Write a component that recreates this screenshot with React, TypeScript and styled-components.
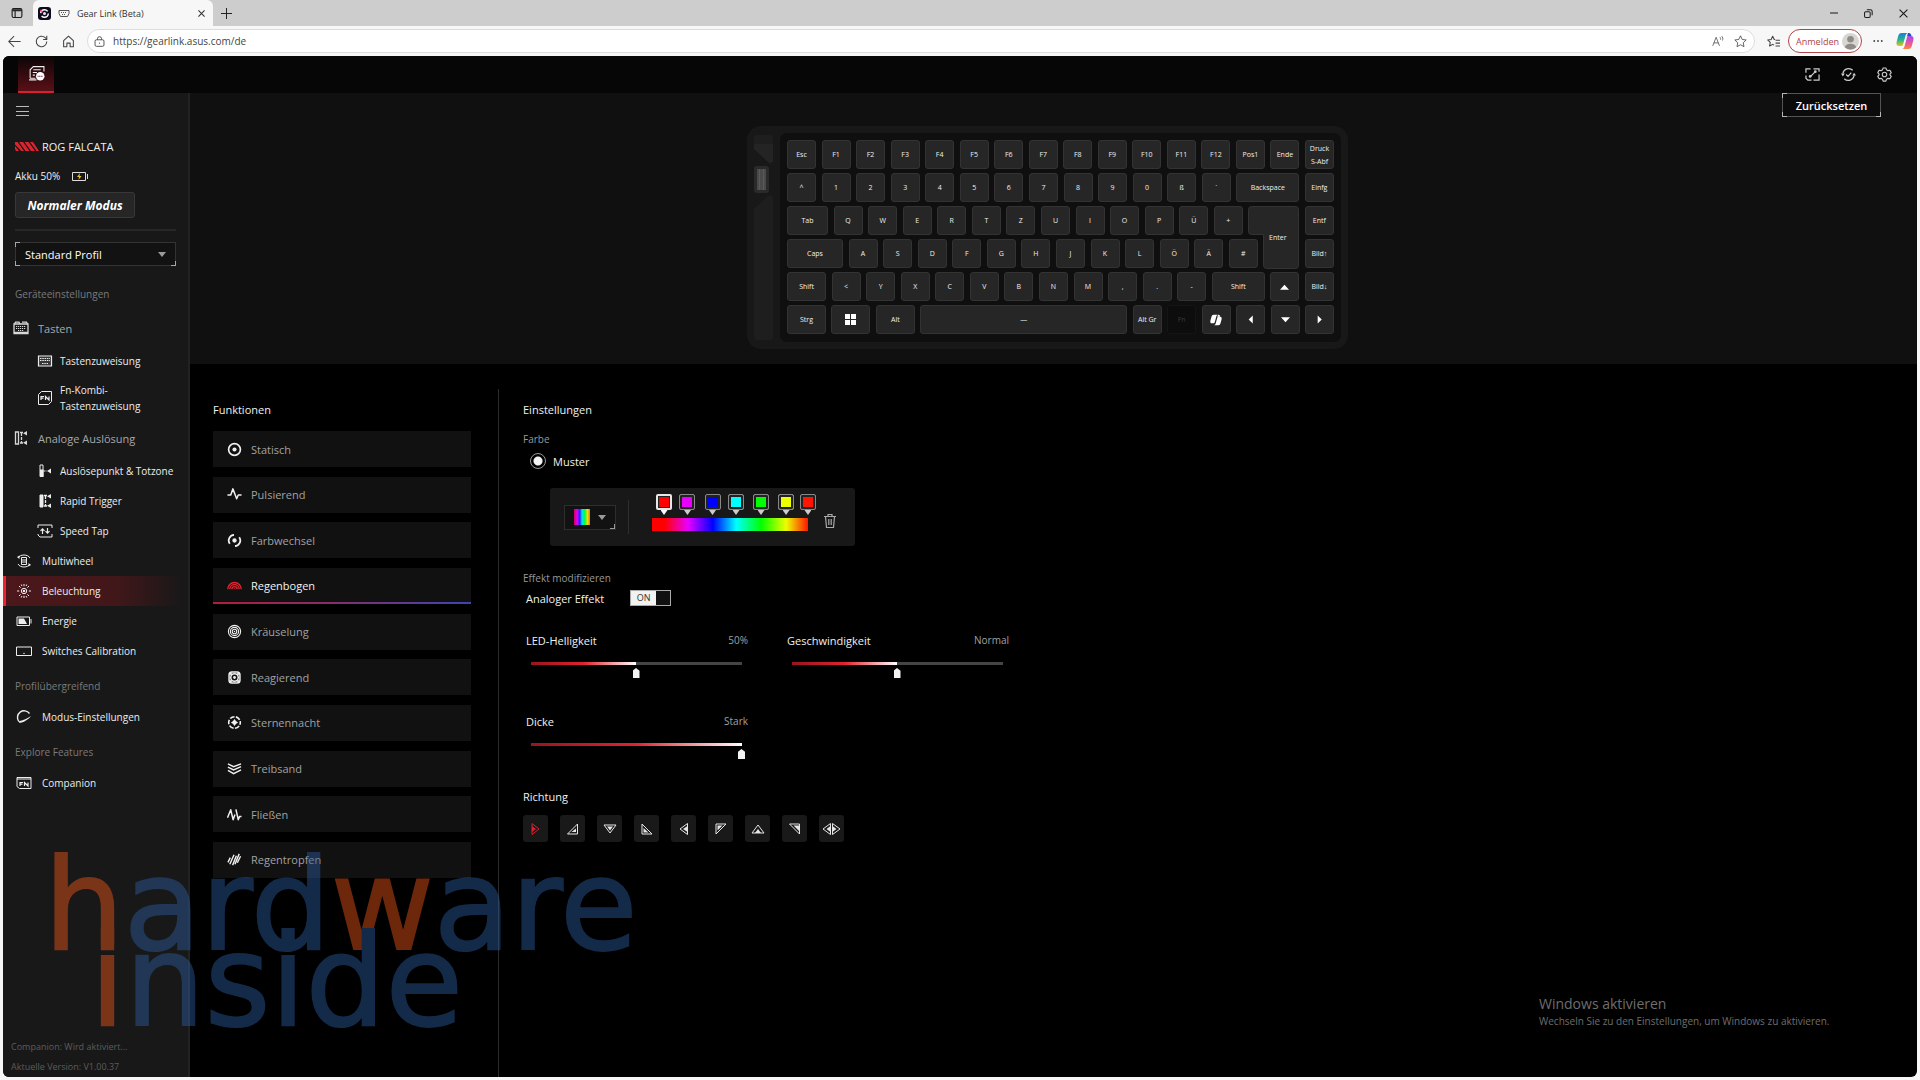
import React, { useState } from "react";
import styled, { createGlobalStyle, css } from "styled-components";

const GlobalStyle = createGlobalStyle`
  *, *::before, *::after { box-sizing: border-box; }
  body {
    margin: 0;
    background: #f7f7f7;
    font-family: "Open Sans", "Noto Sans", sans-serif;
    font-size: 11px;
    color: #f0f0f0;
  }
  button, input, select { font: inherit; color: inherit; }
  button { cursor: pointer; padding: 0; border: 0; background: none; }
  a { color: inherit; text-decoration: none; }
  h2, h3, p, ul { margin: 0; padding: 0; font-weight: 400; }
  ul { list-style: none; }
`;

/* ---------- browser frame ---------- */

const Page = styled.div`
  min-height: 100vh;
  display: flex;
  flex-direction: column;
  position: relative;
  overflow: hidden;
`;

const TabStrip = styled.div`
  height: 26px;
  background: #cdcdcd;
  color: #1b1b1b;
  display: flex;
  align-items: center;
`;

const StripButton = styled.button<{ $w: number }>`
  width: ${(p) => p.$w}px;
  height: 26px;
  display: grid;
  place-items: center;
`;

const BrowserTab = styled.div`
  width: 180px;
  height: 26px;
  padding: 0 8px 0 5px;
  border-radius: 6px 6px 0 0;
  background: #f7f7f7;
  display: flex;
  align-items: center;
  gap: 7px;
  font-size: 9px;
  color: #333;
`;

const TabTitle = styled.span`
  flex: 1;
`;

const WindowButtons = styled.div`
  margin-left: auto;
  display: flex;
`;

const Toolbar = styled.div`
  height: 30px;
  padding: 0 2px 0 1px;
  display: flex;
  align-items: center;
  background: #f7f7f7;
  color: #444;
`;

const ToolButton = styled.button`
  width: 27px;
  height: 26px;
  display: grid;
  place-items: center;
`;

const AddressBar = styled.div`
  flex: 1;
  height: 24px;
  margin: 0 5px;
  padding: 0 0 0 6px;
  border: 1px solid #dcdcdc;
  border-radius: 12px;
  background: #fff;
  display: flex;
  align-items: center;
  gap: 8px;
`;

const AddressInput = styled.input`
  flex: 1;
  border: 0;
  padding: 0;
  outline: 0;
  background: transparent;
  font-size: 10px;
  color: #444;
`;

const AddressActions = styled.div`
  display: flex;
  align-items: center;
  gap: 3px;
`;

const SignIn = styled.button`
  height: 24px;
  margin: 0 2px 0 1px;
  padding: 0 2px 0 7px;
  border: 1px solid #b0444a;
  border-radius: 12px;
  color: #b0444a;
  background: #fff;
  font-size: 9px;
  display: flex;
  align-items: center;
  gap: 3px;
`;

/* ---------- app frame ---------- */

const AppFrame = styled.div`
  flex: 1;
  margin: 0 3px 3px;
  border-radius: 6px;
  overflow: hidden;
  background: #000;
  display: flex;
  flex-direction: column;
`;

const DeviceBar = styled.header`
  height: 37px;
  padding: 0 21px 0 15px;
  background: #060606;
  display: flex;
  align-items: center;
  justify-content: space-between;
`;

const DeviceTab = styled.button`
  width: 36px;
  height: 37px;
  border-bottom: 2px solid #d8202e;
  background: linear-gradient(#0a0606, #5a0f17);
  display: grid;
  place-items: center;
`;

const HeaderTools = styled.div`
  display: flex;
  gap: 12px;
`;

const HeaderButton = styled.button`
  width: 24px;
  height: 24px;
  display: grid;
  place-items: center;
  color: #ccc;
`;

const Body = styled.div`
  flex: 1;
  display: flex;
`;

/* ---------- sidebar ---------- */

const Sidebar = styled.aside`
  width: 187px;
  border-right: 2px solid #222;
  background: #181818;
  display: flex;
  flex-direction: column;
`;

const DeviceInfo = styled.div`
  padding: 8px 12px 0;
  display: flex;
  flex-direction: column;
  align-items: flex-start;
`;

const MenuButton = styled.button`
  height: 20px;
  display: grid;
  place-items: center;
`;

const DeviceName = styled.h2`
  height: 20px;
  margin-top: 15px;
  font-size: 11px;
  display: flex;
  align-items: center;
  gap: 3px;
`;

const Battery = styled.p`
  height: 20px;
  margin-top: 10px;
  font-size: 10px;
  display: flex;
  align-items: center;
  gap: 12px;
`;

const ModeButton = styled.button`
  width: 120px;
  height: 26px;
  margin-top: 6px;
  border: 1px solid #383838;
  border-radius: 3px;
  background: #262626;
  color: #fff;
  font-size: 12px;
  font-weight: 700;
  font-style: italic;
`;

const Rule = styled.hr`
  width: 100%;
  height: 2px;
  margin: 11px 0;
  border: 0;
  background: #272727;
`;

const frame = css`
  border: 1px solid #333;
  background-color: #121212;
  background-image: linear-gradient(#999, #999), linear-gradient(#999, #999), linear-gradient(#999, #999),
    linear-gradient(#999, #999), linear-gradient(#999, #999), linear-gradient(#999, #999);
  background-origin: border-box;
  background-repeat: no-repeat;
  background-size: 5px 1px, 1px 5px, 5px 1px, 1px 5px, 5px 1px, 1px 5px;
  background-position: 0 0, 0 0, 0 100%, 0 100%, 100% 100%, 100% 100%;
  border-color: rgba(255, 255, 255, 0.14);
`;

const SelectBox = styled.div`
  width: 100%;
  height: 24px;
  display: grid;
  align-items: center;
  > * { grid-area: 1 / 1; }
  > svg { justify-self: end; margin-right: 10px; pointer-events: none; }
`;

const ProfileSelect = styled.select`
  ${frame}
  appearance: none;
  width: 100%;
  height: 24px;
  padding: 0 9px;
  border-radius: 0;
  color: #fff;
  outline: 0;
`;

const Nav = styled.nav`
  margin-top: 18px;
  display: flex;
  flex-direction: column;
`;

const GroupLabel = styled.h3`
  height: 20px;
  margin: 10px 0 6px;
  padding-left: 12px;
  font-size: 10px;
  line-height: 20px;
  color: #7a7a7a;
  &:first-child { margin-top: 0; }
`;

const SectionLabel = styled.h3`
  height: 36px;
  padding-left: 10px;
  font-size: 11px;
  color: #a8a8a8;
  display: flex;
  align-items: center;
  gap: 9px;
  > svg { color: #d8d8d8; }
`;

const NavLink = styled.a<{ $sub?: boolean; $active?: boolean; $tall?: boolean }>`
  min-height: ${(p) => (p.$tall ? 44 : 30)}px;
  padding-left: ${(p) => (p.$sub ? 34 : 13)}px;
  font-size: 10px;
  line-height: 16px;
  display: flex;
  align-items: center;
  gap: ${(p) => (p.$sub ? 7 : 10)}px;
  color: #ededed;
  ${(p) =>
    p.$active &&
    css`
      padding-left: 10px;
      border-left: 3px solid #ee2230;
      background: linear-gradient(90deg, #4d171b, #42171a 60%, #181818 97%);
    `}
  > svg { flex: none; }
`;

const SideFooter = styled.footer`
  margin-top: auto;
  padding: 0 8px;
  font-size: 9px;
  line-height: 20px;
  color: #5c5c5c;
`;

/* ---------- preview area ---------- */

const Main = styled.main`
  flex: 1;
  display: flex;
  flex-direction: column;
`;

const Preview = styled.section`
  padding: 0 36px 15px 24px;
  background: #101010;
  display: grid;
  grid-template-columns: 1fr auto 1fr;
`;

const ResetButton = styled.button`
  ${frame}
  grid-column: 3;
  justify-self: end;
  width: 99px;
  height: 24px;
  background-color: #0b0b0b;
  color: #fff;
  font-weight: 600;
  font-size: 11px;
  border-color: rgba(255, 255, 255, 0.3);
`;

const KeyboardCase = styled.div`
  grid-column: 2;
  margin-top: 33px;
  padding: 7px;
  border-radius: 14px;
  background: #181818;
  display: flex;
  gap: 7px;
`;

const KeyPlate = styled.div`
  width: 561px;
  padding: 7px;
  border-radius: 7px;
  background: #0f0f0f;
  display: flex;
  flex-direction: column;
  gap: 4px;
`;

const KeyRow = styled.div`
  display: flex;
  justify-content: space-between;
`;

const Key = styled.button<{ $w: number; $off?: boolean }>`
  width: ${(p) => p.$w}px;
  height: 29px;
  border: 1px solid ${(p) => (p.$off ? "#151515" : "#333")};
  border-radius: 3px;
  background: ${(p) => (p.$off ? "#0d0d0d" : "#262626")};
  color: ${(p) => (p.$off ? "#3a3a3a" : "#f0f0f0")};
  font-size: 7px;
  line-height: 13px;
  white-space: pre-line;
  display: grid;
  place-items: center;
`;

const KeySpace = styled.span<{ $w: number }>`
  width: ${(p) => p.$w}px;
`;

const EnterSlot = styled.span`
  position: relative;
  width: 51px;
`;

const EnterKey = styled.button`
  position: absolute;
  inset: 0 auto auto 0;
  width: 51px;
  height: 63px;
  font-size: 7px;
  color: #f0f0f0;
  display: grid;
  place-items: center;
  > * { grid-area: 1 / 1; }
  > span { padding-left: 8px; }
`;

/* ---------- functions and settings ---------- */

const Workspace = styled.div`
  flex: 1;
  padding: 25px 0 0 23px;
  display: flex;
`;

const FunctionPane = styled.section`
  width: 286px;
  padding-right: 27px;
  border-right: 1px solid #2b2b2b;
`;

const PaneTitle = styled.h2`
  height: 20px;
  margin-top: 11px;
  font-size: 11px;
  line-height: 20px;
`;

const FunctionList = styled.ul`
  min-height: 447px;
  margin-top: 11px;
  display: flex;
  flex-direction: column;
  justify-content: space-between;
`;

const FunctionButton = styled.button<{ $active: boolean }>`
  width: 100%;
  height: 36px;
  padding: 0 14px;
  background: #111;
  color: ${(p) => (p.$active ? "#f2f2f2" : "#a2a2a2")};
  font-size: 11px;
  display: flex;
  align-items: center;
  gap: 9px;
  ${(p) =>
    p.$active &&
    css`
      background: linear-gradient(90deg, #b41c3e, #803070 50%, #3e44b4) 0 100% / 100% 2px no-repeat #111;
    `}
  > svg { color: ${(p) => (p.$active ? "#e02430" : "#f0f0f0")}; }
`;

const SettingsPane = styled.section`
  flex: 1;
  padding-left: 24px;
`;

const MinorLabel = styled.h3<{ $first?: boolean }>`
  height: 20px;
  margin-top: ${(p) => (p.$first ? 9 : 0)}px;
  font-size: 10px;
  line-height: 20px;
  color: #989898;
`;

const PatternOption = styled.label`
  height: 20px;
  margin-top: 2px;
  padding-left: 7px;
  display: flex;
  align-items: center;
  gap: 7px;
  font-size: 11px;
`;

const Radio = styled.input`
  appearance: none;
  width: 16px;
  height: 16px;
  margin: 0;
  border: 1px solid #999;
  border-radius: 50%;
  &:checked { background: radial-gradient(circle, #f4f4f4 4px, transparent 5px); }
`;

const GradientPanel = styled.div`
  width: 305px;
  height: 58px;
  margin: 17px 0 22px 27px;
  padding: 0 18px 0 14px;
  border-radius: 3px;
  background: #181818;
  display: flex;
  align-items: center;
`;

const PresetButton = styled.button`
  width: 52px;
  height: 25px;
  border: 1px solid #2e2e2e;
  background: linear-gradient(#999, #999) 100% 100% / 5px 1px no-repeat,
    linear-gradient(#999, #999) 100% 100% / 1px 5px no-repeat, #121212;
  display: flex;
  align-items: center;
  justify-content: center;
  gap: 8px;
`;

const PresetSwatch = styled.span`
  width: 16px;
  height: 16px;
  background: linear-gradient(90deg, #d00060, #e000ff 20%, #2020ff 36%, #00e0ff 50%, #00ff40 68%, #f0e000 84%, #ff7000);
`;

const PanelRule = styled.span`
  width: 1px;
  height: 34px;
  margin: 0 23px 0 12px;
  background: #2e2e2e;
`;

const GradientTrack = styled.div`
  position: relative;
  align-self: flex-start;
  width: 158px;
  margin-top: 6px;
  padding-top: 24px;
`;

const GradientBar = styled.div`
  height: 13px;
`;

const Stop = styled.button<{ $color: string; $active: boolean }>`
  position: absolute;
  top: 0;
  width: 16px;
  height: 21px;
  margin-left: -8px;
  display: grid;
  justify-items: center;
  grid-template-rows: 16px 5px;
  &::before {
    content: "";
    width: 16px;
    height: 16px;
    border: ${(p) => (p.$active ? "2px solid #e8e8e8" : "1px solid #888")};
    border-radius: 2px;
    background: ${(p) => p.$color};
    box-shadow: inset 0 0 0 ${(p) => (p.$active ? 1 : 2)}px #222;
  }
  &::after {
    content: "";
    width: 7px;
    height: 5px;
    background: ${(p) => (p.$active ? "#fff" : "#ccc")};
    clip-path: polygon(0 0, 100% 0, 50% 100%);
  }
`;

const TrashButton = styled.button`
  width: 14px;
  height: 16px;
  margin: 8px 0 0 15px;
`;

const EffectRow = styled.div`
  height: 20px;
  padding-left: 3px;
  display: flex;
  align-items: center;
  gap: 26px;
`;

const Toggle = styled.button`
  width: 41px;
  height: 16px;
  border: 1px solid #aaa;
  background: #111;
  display: flex;
  > span {
    width: 25px;
    background: #f2f2f2;
    color: #333;
    font-size: 9px;
    line-height: 14px;
  }
`;

const Sliders = styled.div`
  margin: 22px 0 0 3px;
  display: grid;
  grid-template-columns: 222px 222px;
  gap: 32px 39px;
`;

const SliderField = styled.div`
  height: 49px;
`;

const SliderHead = styled.div`
  height: 20px;
  display: flex;
  align-items: center;
  justify-content: space-between;
  > output { font-size: 10px; color: #a0a0a0; }
`;

const Range = styled.input`
  --fill: 50%;
  appearance: none;
  display: block;
  width: 218px;
  height: 17px;
  margin: 12px 0 0 1px;
  background: linear-gradient(90deg, #98141f, #e22230 calc(var(--fill) / 2), #fff var(--fill), #454545 var(--fill))
    center top / calc(100% - 7px) 3px no-repeat;
  outline: 0;
  &::-webkit-slider-runnable-track { height: 17px; }
  &::-webkit-slider-thumb {
    appearance: none;
    width: 7px;
    height: 10px;
    margin-top: 6px;
    background: #f2f2f2;
    clip-path: polygon(50% 0, 100% 28%, 100% 100%, 0 100%, 0 28%);
  }
`;

const DirectionTitle = styled.h3`
  height: 20px;
  margin-top: 27px;
  font-size: 11px;
  line-height: 20px;
`;

const Directions = styled.div`
  margin-top: 8px;
  display: flex;
  gap: 12px;
`;

const DirectionButton = styled.button<{ $active: boolean }>`
  width: 25px;
  height: 27px;
  border-radius: 3px;
  background: #191919;
  color: ${(p) => (p.$active ? "#d8202e" : "#e6e6e6")};
  display: grid;
  place-items: center;
`;

/* ---------- overlays ---------- */

const Watermark = styled.div`
  position: absolute;
  left: 44px;
  bottom: 60px;
  font-family: "DejaVu Sans", sans-serif;
  font-size: 126px;
  line-height: 76px;
  color: #2c5da0;
  opacity: 0.45;
  pointer-events: none;
  -webkit-text-stroke: 2px currentColor;
  > div + div { padding-left: 46px; }
  em { font-style: normal; color: #f25718; }
`;

const Activation = styled.div`
  position: absolute;
  right: 80px;
  bottom: 51px;
  min-width: 301px;
  color: #6e6e6e;
  font-size: 10px;
  line-height: 16px;
  pointer-events: none;
  > strong { display: block; font-weight: 400; font-size: 14px; line-height: 18px; }
`;

/* ---------- icons ---------- */

type IconProps = { w?: number; h?: number; box?: string; sw?: number; children: React.ReactNode };
const Icon = ({ w = 16, h = w, box = "0 0 16 16", sw = 1, children }: IconProps) => (
  <svg width={w} height={h} viewBox={box} fill="none" stroke="currentColor" strokeWidth={sw} aria-hidden="true">
    {children}
  </svg>
);
const F = { fill: "currentColor", stroke: "none" };

const Caret = () => (
  <svg width="8" height="5" viewBox="0 0 8 5" aria-hidden="true">
    <path d="M0 0h8L4 5z" fill="#9a9a9a" />
  </svg>
);

const icons: Record<string, React.ReactNode> = {
  keys: <Icon><path d="M1 4h14v9.500H1zM1.500 4l1-1.800h3.500l1 1.800M9 2.200h4.500l1 1.800M1 12.500h14" strokeWidth="1.300" /><path d="M3 6.500h10M3 8.500h10M5 10.500h6" strokeDasharray="1.200 .8" /></Icon>,
  keyboard: <Icon><path d="M1.500 3h13v10h-13z" fill="currentColor" fillOpacity=".15" strokeWidth="1.200" /><path d="M3 5.500h10M3 7.500h10M5 10.500h6" strokeDasharray="1.500 .8" /></Icon>,
  fn: <Icon><path d="M4.500 1.500h10v10l-3 3h-10v-10z" /><path d="M4 10V6.500h3M4 8.200h2.500M8.500 10V6.500L12 10V6.500" strokeWidth="1.200" /></Icon>,
  analog: <Icon><path d="M2.500 2h3v12h-3z" strokeWidth="1.300" /><path d="M7 2.500h4M7 13h4M8.500 3v10" strokeDasharray="3 1" strokeWidth="1.300" /><path d="M14 1v4.500L10 3.200zM14 10.500V15l-4-2.200z" {...F} /></Icon>,
  point: <Icon><path d="M3 2h3v11.500H3z" /><path d="M3 6.500h3.500V14H3zM14 5.500v5L10 8z" {...F} /><path d="M6.500 8H10" strokeDasharray="2 1" /></Icon>,
  rapid: <Icon><path d="M3 2h3v12H3z" fill="currentColor" /><path d="M7 2.500h4M7 13h4M8.500 3v10" strokeDasharray="3 1" strokeWidth="1.300" /><path d="M14 1v4.500L10 3.200zM14 10.500V15l-4-2.200z" {...F} /></Icon>,
  tap: <Icon><path d="M1 5V2h14v3M1 11v1l2 2h12v-3" /><path d="M5.500 11V6M3.500 7.800l2-2 2 2M10.500 5v5M8.500 8.200l2 2 2-2" strokeWidth="1.200" /></Icon>,
  wheel: <Icon><path d="M5.500 4.500h5v7h-5zM7 6v4M9 6v4M2 5c1-2 3.500-3 6-3s5 1 6 3M2 11c1 2 3.500 3 6 3s5-1 6-3" /><path d="M1 4l2.500-1.500V6zM15 12l-2.500 1.500V10z" {...F} /></Icon>,
  light: <Icon><circle cx="8" cy="8" r="2.700" /><circle cx="8" cy="8" r="1.300" {...F} /><path d="M8 1v2.200M8 12.800V15M1 8h2.200M12.800 8H15M3 3l1.600 1.600M11.400 11.400L13 13M3 13l1.600-1.600M11.400 4.600L13 3M5.300 1.500l.6 1.500M10.700 1.500l-.6 1.500M5.300 14.500l.6-1.500M10.700 14.500l-.6-1.500" /></Icon>,
  energy: <Icon><path d="M1 4h12.500v8.500H1zM15 6v4.500" /><path d="M2.500 5.500H8l3 5.500H2.500z" {...F} /></Icon>,
  calib: <Icon><path d="M.5 4h15v8.500H.5z" /><path d="M7 11l1-1.500L9 11z" {...F} /></Icon>,
  gauge: <Icon><path d="M2.800 12.500A6.300 6.300 0 1113.500 4.500" strokeWidth="1.400" /><path d="M3 13.800C7 14 12 11 15 7 12 9 8 11.500 3 12.200z" {...F} /></Icon>,
  companion: <Icon><path d="M1 2.500h14v11H3.500L1 11.500zM1 4h14" /><path d="M4 11V7.500h3M4 9.200h2.500M8.500 11V7.500L12 11V7.500" strokeWidth="1.200" /></Icon>,
};

const fnIcons: Record<string, React.ReactNode> = {
  Statisch: <Icon w={15} sw={1.8}><circle cx="8" cy="8" r="6.300" /><circle cx="8" cy="8" r="2.200" {...F} /></Icon>,
  Pulsierend: <Icon w={15} sw={1.6}><path d="M.5 8.500H4L6.300 2l4 10.500 1.700-4h3.500" strokeLinejoin="round" /></Icon>,
  Farbwechsel: <Icon w={15} sw={1.9}><path d="M3 11.500A6 6 0 017.500 2M13 4.500A6 6 0 018.500 14" /><circle cx="8" cy="8" r="2.300" {...F} /></Icon>,
  Regenbogen: <Icon w={15} sw={1.5}><path d="M.8 12a7.200 7.200 0 0114.400 0M3 12a5 5 0 0110 0M5.200 12a2.800 2.800 0 015.600 0" /><path d="M7 12a1 1 0 012 0z" {...F} /></Icon>,
  Kräuselung: <Icon w={15} sw={1.2}><circle cx="8" cy="8" r="6.500" /><circle cx="8" cy="8" r="4.400" /><circle cx="8" cy="8" r="2.400" /><circle cx="8" cy="8" r=".8" {...F} /></Icon>,
  Reagierend: <Icon w={15} sw={1.6}><rect x="2.200" y="2.200" width="11.600" height="11.600" rx="3" /><circle cx="8" cy="8" r="4" /><circle cx="8" cy="8" r="1.500" {...F} /><path d="M3 3l2 2M13 3l-2 2M3 13l2-2M13 13l-2-2" strokeWidth="2.200" /></Icon>,
  Sternennacht: <Icon w={15} sw={1.7}><circle cx="8" cy="8" r="6.200" strokeDasharray="5 1.500" strokeDashoffset="2.500" /><path d="M8 4.200l1.500 2.300L11.800 8 9.500 9.500 8 11.800 6.500 9.500 4.200 8l2.300-1.500z" {...F} /></Icon>,
  Treibsand: <Icon w={15} sw={1.5}><path d="M1 3l6 3 8-3M1 6.500l6 3 8-3.500M1 10l6 3.500L15 9.500" /></Icon>,
  Fließen: <Icon w={15} sw={1.6}><path d="M.5 11.500L4 3l2.500 10.500 2-5.500M9.500 2.500L12 13.500l1.500-3.500h2" strokeLinejoin="round" /></Icon>,
  Regentropfen: <Icon w={15} sw={1.5}><path d="M1 11l2.500-5M3 13L7.500 3M6 14L10 4M8.500 13L13 2M11 11.500l3.500-7" /></Icon>,
};

const CopilotGlyph = ({ color }: { color?: boolean }) => (
  <svg width={color ? 18 : 12} height={color ? 18 : 12} viewBox="0 0 18 18" aria-hidden="true">
    <defs>
      <linearGradient id="cpA" x1="0" y1="0" x2="0" y2="1">
        <stop offset="0" stopColor="#1b7fe0" /><stop offset=".5" stopColor="#22b38c" /><stop offset="1" stopColor="#e5c51a" />
      </linearGradient>
      <linearGradient id="cpB" x1="0" y1="0" x2="0" y2="1">
        <stop offset="0" stopColor="#a24be8" /><stop offset=".6" stopColor="#f0569a" /><stop offset="1" stopColor="#f98a3c" />
      </linearGradient>
    </defs>
    <path d="M5.500 1h6.500c-1.500.3-2.200 1.400-2.600 3L7.200 12c-.5 1.500-1 2-2.500 2H3C.8 14 0 12.300.6 10L2.200 4C2.800 2 3.700 1 5.500 1z" fill={color ? "url(#cpA)" : "#fff"} />
    <path d="M12.500 17H6c1.500-.3 2.200-1.400 2.600-3l2.200-8c.5-1.500 1-2 2.500-2H15c2.200 0 3 1.700 2.400 4l-1.600 6c-.6 2-1.500 3-3.300 3z" fill={color ? "url(#cpB)" : "#fff"} />
    <path d="M12 1h.8c1.600 0 2.200 1 2.700 3h-2.700c-1.300 0-1.900.6-2.400 2z" fill={color ? "#1f4fc8" : "#fff"} />
  </svg>
);

const arrowPaths: Record<string, string> = {
  up: "M0 8.500h10L5 3z",
  down: "M0 2.500h10L5 8z",
  left: "M7.500 .5v9L3 5z",
  right: "M3 .5v9L7.500 5z",
};
const Arrow = ({ dir }: { dir: string }) => (
  <svg width="9" height="9" viewBox="0 0 10 10" aria-hidden="true">
    <path d={arrowPaths[dir]} fill="#fff" />
  </svg>
);

/* ---------- keyboard data ---------- */

type KeyDef = { t: string; w?: number; glyph?: React.ReactNode; off?: boolean; kind?: "enter" | "space" };
const k = (s: string): KeyDef[] => s.split(" ").map((t) => ({ t }));
const rows: KeyDef[][] = [
  [...k("Esc F1 F2 F3 F4 F5 F6 F7 F8 F9 F10 F11 F12 Pos1 Ende"), { t: "Druck\nS-Abf" }],
  [...k("^ 1 2 3 4 5 6 7 8 9 0 ß ´"), { t: "Backspace", w: 63 }, { t: "Einfg" }],
  [{ t: "Tab", w: 41 }, ...k("Q W E R T Z U I O P Ü +"), { t: "Enter", kind: "enter" }, { t: "Entf" }],
  [{ t: "Caps", w: 56 }, ...k("A S D F G H J K L Ö Ä #"), { t: "", w: 36, kind: "space" }, { t: "Bild↑" }],
  [{ t: "Shift", w: 39 }, ...k("< Y X C V B N M , . -"), { t: "Shift", w: 53 }, { t: "Hoch", glyph: <Arrow dir="up" /> }, { t: "Bild↓" }],
  [
    { t: "Strg", w: 39 },
    { t: "Windows", w: 39, glyph: <svg width="11" height="11" viewBox="0 0 11 11" aria-hidden="true"><path d="M0 0h5v5H0zM6 0h5v5H6zM0 6h5v5H0zM6 6h5v5H6z" fill="#fff" /></svg> },
    { t: "Alt", w: 39 },
    { t: "—", w: 207 },
    { t: "Alt Gr" },
    { t: "Fn", off: true },
    { t: "Copilot", glyph: <CopilotGlyph /> },
    { t: "Links", glyph: <Arrow dir="left" /> },
    { t: "Runter", glyph: <Arrow dir="down" /> },
    { t: "Rechts", glyph: <Arrow dir="right" /> },
  ],
];

const Keyboard = () => (
  <KeyboardCase>
    <svg width="19" height="209" viewBox="0 0 19 209" aria-hidden="true">
      <path d="M0 11V5a3 3 0 013-3h13a3 3 0 013 3v6z" fill="#1e1e1e" />
      <path d="M0 11h19v15a3 3 0 01-5 3L0 16z" fill="#242424" />
      <rect x="0" y="33" width="15" height="27" rx="3" fill="#2a2a2a" />
      <rect x="3" y="36" width="9" height="21" fill="#4a4a4a" />
      <path d="M5.500 36v21M9.500 36v21" stroke="#5a5a5a" />
      <path d="M0 76L14 63a3 3 0 015 2v139a3 3 0 01-3 3H3a3 3 0 01-3-3z" fill="#1e1e1e" />
    </svg>
    <KeyPlate>
      {rows.map((row, r) => (
        <KeyRow key={r}>
          {row.map((d, i) => {
            if (d.kind === "space") return <KeySpace key={i} $w={d.w ?? 29} />;
            if (d.kind === "enter")
              return (
                <EnterSlot key={i}>
                  <EnterKey>
                    <svg width="51" height="63" viewBox="0 0 51 63" aria-hidden="true">
                      <path d="M3.500.5h44a3 3 0 013 3v56a3 3 0 01-3 3h-29a3 3 0 01-3-3V28.500h-12a3 3 0 01-3-3v-22a3 3 0 013-3z" fill="#262626" stroke="#333" />
                    </svg>
                    <span>{d.t}</span>
                  </EnterKey>
                </EnterSlot>
              );
            return (
              <Key key={i} $w={d.w ?? 29} $off={d.off} aria-label={d.glyph ? d.t : undefined}>
                {d.glyph ?? d.t}
              </Key>
            );
          })}
        </KeyRow>
      ))}
    </KeyPlate>
  </KeyboardCase>
);

/* ---------- settings data ---------- */

const stops = [
  { c: "#ff0000", p: 8 },
  { c: "#e800ff", p: 23 },
  { c: "#0000ff", p: 39 },
  { c: "#00ffff", p: 54 },
  { c: "#00ff00", p: 70 },
  { c: "#eeff00", p: 86 },
  { c: "#ff1500", p: 100 },
];

const directionShapes: [string, string, string][] = [
  ["Rechts", "M4 2.500v11L11 8z", "M4 5v6L8 8z"],
  ["Oben rechts", "M12.500 3v10h-10z", "M11 7.500V11H6.500z"],
  ["Unten", "M2 4h12L8 12z", "M5 5.500h6L8 9.500z"],
  ["Oben links", "M3 3v10h10z", "M4.500 7v4.500h5z"],
  ["Links", "M11.500 2.500v11L4 8z", "M11.500 5v6L7 8z"],
  ["Unten links", "M3 13V3h10z", "M4.500 9.500V4.500h5z"],
  ["Oben", "M2 12h12L8 4z", "M5 12h6L8 8z"],
  ["Unten rechts", "M12.500 13V3h-10z", "M12 10V4.500H6.500z"],
];

type SliderProps = { id: string; label: string; text: (v: number) => string; initial: number };
const Slider = ({ id, label, text, initial }: SliderProps) => {
  const [value, setValue] = useState(initial);
  return (
    <SliderField>
      <SliderHead>
        <label htmlFor={id}>{label}</label>
        <output htmlFor={id}>{text(value)}</output>
      </SliderHead>
      <Range
        id={id}
        type="range"
        min={0}
        max={100}
        value={value}
        onChange={(e) => setValue(Number(e.target.value))}
        style={{ "--fill": `${value}%` } as React.CSSProperties}
      />
    </SliderField>
  );
};

const BrowserChrome = () => (
  <>
    <TabStrip>
      <StripButton $w={33} aria-label="Tab-Aktionen">
        <Icon w={12}><rect x="1.500" y="2" width="13" height="12" rx="2" strokeWidth="1.500" /><path d="M2 5h12M5.500 5v9" strokeWidth="1.500" /><path d="M2 3h12v2H2z" {...F} /></Icon>
      </StripButton>
      <BrowserTab>
        <svg width="13" height="13" viewBox="0 0 13 13" aria-hidden="true">
          <rect width="13" height="13" rx="3" fill="#0c0c1c" />
          <circle cx="6.500" cy="6.500" r="3.800" fill="none" stroke="#fff" strokeWidth="1.500" strokeDasharray="9 3" />
          <circle cx="6.500" cy="6.500" r="1.500" fill="#dfe4ff" /><path d="M2 3l3 2" stroke="#e93a7a" strokeWidth="1.200" />
        </svg>
        <svg width="12" height="7" viewBox="0 0 12 7" fill="none" stroke="#555" aria-hidden="true">
          <path d="M1 .5h10v3L9.500 6.500h-7L1 3.500z" /><path d="M3 2.500h6M4 4.500h4" strokeDasharray="1 1" />
        </svg>
        <TabTitle>Gear Link (Beta)</TabTitle>
        <StripButton $w={8} aria-label="Tab schließen"><Icon w={7} sw={2.4}><path d="M1 1l14 14M15 1L1 15" /></Icon></StripButton>
      </BrowserTab>
      <StripButton $w={26} aria-label="Neuer Tab"><Icon w={11} sw={1.4}><path d="M8 0v16M0 8h16" /></Icon></StripButton>
      <WindowButtons>
        <StripButton $w={35} aria-label="Minimieren"><Icon w={8} sw={2}><path d="M0 8h16" /></Icon></StripButton>
        <StripButton $w={35} aria-label="Verkleinern"><Icon w={9} sw={1.8}><rect x="1" y="5" width="10" height="10" rx="2" /><path d="M5 1.500h6.500a3 3 0 013 3V11" /></Icon></StripButton>
        <StripButton $w={34} aria-label="Schließen"><Icon w={9} sw={2}><path d="M1 1l14 14M15 1L1 15" /></Icon></StripButton>
      </WindowButtons>
    </TabStrip>
    <Toolbar>
      <ToolButton aria-label="Zurück"><Icon w={13}><path d="M15.500 8H1M7.500 1.500L1 8l6.500 6.500" strokeWidth="1.300" /></Icon></ToolButton>
      <ToolButton aria-label="Neu laden"><Icon w={13}><path d="M14.500 8a6.500 6.500 0 11-2-4.700L14.500 5M14.500 1v4.500H10" strokeWidth="1.300" /></Icon></ToolButton>
      <ToolButton aria-label="Startseite"><Icon w={13}><path d="M2 7l6-5.500L14 7v7.500h-4V10H6v4.500H2z" strokeLinejoin="round" strokeWidth="1.300" /></Icon></ToolButton>
      <AddressBar>
        <Icon w={11} sw={1.3}><rect x="1.500" y="5.500" width="13" height="9.500" rx="2" /><path d="M5 5.500V4a3 3 0 016 0v1.500" /><circle cx="8" cy="10.300" r="1" {...F} /></Icon>
        <AddressInput aria-label="Adresse" readOnly value="https://gearlink.asus.com/de" />
        <AddressActions>
          <Icon w={12}><path d="M1 14.500L5.500 3 10 14.500M2.500 10.500h6M10.500 3c1 .8 1.200 2 .8 3.200M13 1.500c1.500 1.500 1.800 3.800 1 5.800" /></Icon>
          <ToolButton aria-label="Favorit hinzufügen"><Icon w={13}><path d="M8 1l2.100 4.500 4.900.6-3.600 3.400.9 4.900L8 12l-4.300 2.400.9-4.900L1 6.100l4.900-.6z" strokeLinejoin="round" /></Icon></ToolButton>
        </AddressActions>
      </AddressBar>
      <ToolButton aria-label="Favoriten"><Icon w={13}><path d="M10 5.600L8.900 5.500 7 1.500 5.100 5.500.8 6.100l3.200 3.100-.8 4.400L7 11.500l1.800 1M10.500 6.500H16M10.500 10H16M10.500 13.500H16" strokeWidth="1.300" strokeLinejoin="round" /></Icon></ToolButton>
      <SignIn>
        Anmelden
        <svg width="17" height="17" viewBox="0 0 17 17" aria-hidden="true"><circle cx="8.500" cy="8.500" r="8.500" fill="#d8d6d3" /><circle cx="8.500" cy="6.300" r="3.300" fill="#8f8b87" /><path d="M3 14.500c0-5 11-5 11 0a8.500 8.500 0 01-11 0z" fill="#8f8b87" /></svg>
      </SignIn>
      <ToolButton aria-label="Mehr"><Icon w={10}><circle cx="2" cy="8" r="1.500" {...F} /><circle cx="8" cy="8" r="1.500" {...F} /><circle cx="14" cy="8" r="1.500" {...F} /></Icon></ToolButton>
      <ToolButton aria-label="Copilot"><CopilotGlyph color /></ToolButton>
    </Toolbar>
  </>
);

const SideNav = () => (
  <Sidebar>
    <DeviceInfo>
      <MenuButton aria-label="Menü">
        <svg width="14" height="12" viewBox="0 0 14 12" stroke="#bbb" aria-hidden="true"><path d="M1 1.500h13M1 6.500h13M1 10.500h13" /></svg>
      </MenuButton>
      <DeviceName>
        <svg width="24" height="9" viewBox="0 0 24 9" fill="#dc2430" aria-hidden="true">
          <path d="M0 0h2.500l6.500 9H6.300L0 2.500zM4 0h4l6.500 9h-4zM9.500 0h4l6.500 9h-4zM15 0h3l6 9h-2.500zM0 4l4 5H1L0 7z" />
        </svg>
        ROG FALCATA
      </DeviceName>
      <Battery>
        Akku 50%
        <svg width="16" height="9" viewBox="0 0 16 9" fill="none" aria-hidden="true">
          <path d="M.5.500h13v8H.5zM15.500 2v5" stroke="#ddd" /><path d="M8 1L5 5h2L6.500 8l3-4h-2z" fill="#f2c21b" />
        </svg>
      </Battery>
      <ModeButton>Normaler Modus</ModeButton>
      <Rule />
      <SelectBox>
        <ProfileSelect aria-label="Profil" defaultValue="Standard Profil">
          <option>Standard Profil</option>
        </ProfileSelect>
        <Caret />
      </SelectBox>
    </DeviceInfo>
    <Nav>
      <GroupLabel>Geräteeinstellungen</GroupLabel>
      <SectionLabel>{icons.keys}Tasten</SectionLabel>
      <NavLink href="#tasten" $sub>{icons.keyboard}Tastenzuweisung</NavLink>
      <NavLink href="#fn" $sub $tall>{icons.fn}<span>Fn-Kombi-<br />Tastenzuweisung</span></NavLink>
      <SectionLabel>{icons.analog}Analoge Auslösung</SectionLabel>
      <NavLink href="#punkt" $sub>{icons.point}Auslösepunkt &amp; Totzone</NavLink>
      <NavLink href="#rapid" $sub>{icons.rapid}Rapid Trigger</NavLink>
      <NavLink href="#speed" $sub>{icons.tap}Speed Tap</NavLink>
      <NavLink href="#wheel">{icons.wheel}Multiwheel</NavLink>
      <NavLink href="#licht" $active aria-current="page">{icons.light}Beleuchtung</NavLink>
      <NavLink href="#energie">{icons.energy}Energie</NavLink>
      <NavLink href="#switches">{icons.calib}Switches Calibration</NavLink>
      <GroupLabel>Profilübergreifend</GroupLabel>
      <NavLink href="#modus">{icons.gauge}Modus-Einstellungen</NavLink>
      <GroupLabel>Explore Features</GroupLabel>
      <NavLink href="#companion">{icons.companion}Companion</NavLink>
    </Nav>
    <SideFooter>
      <p>Companion: Wird aktiviert...</p>
      <p>Aktuelle Version: V1.00.37</p>
    </SideFooter>
  </Sidebar>
);

export default function App() {
  const [effect, setEffect] = useState("Regenbogen");
  const [direction, setDirection] = useState("Rechts");
  const [analog, setAnalog] = useState(true);
  return (
    <Page>
      <GlobalStyle />
      <BrowserChrome />
      <AppFrame>
        <DeviceBar>
          <DeviceTab aria-label="Tastatur">
            <Icon w={17}><path d="M2 12.500V4.500L5 1.500h10V6M1 14h7M2 12.500h5M5 4.500h7M4.500 7h4M4.500 9.500h2" stroke="#eee" /><circle cx="11.500" cy="10.500" r="4" fill="#fff" stroke="none" /><path d="M9 10.500h5" stroke="#6b2028" strokeDasharray="1 .5" /></Icon>
          </DeviceTab>
          <HeaderTools>
            <HeaderButton aria-label="Tastenkombination"><Icon w={15}><path d="M1 6V2h5M9 2h6v3M15 8v6H9M7 14H3l-2-2V9M6 10l5-5" strokeWidth="1.300" /><circle cx="5.500" cy="10" r="1.500" {...F} /><circle cx="11" cy="5" r="1.500" {...F} /></Icon></HeaderButton>
            <HeaderButton aria-label="Aktualisierung"><Icon w={15}><path d="M2 7a6.200 6.200 0 0110.500-3.500M14 9a6.200 6.200 0 01-10.500 3.500M5.500 8l2 2 3.500-4" strokeWidth="1.300" /><path d="M0 7h4L2 10zM12 9h4l-2-3z" {...F} /></Icon></HeaderButton>
            <HeaderButton aria-label="Einstellungen"><Icon w={15} sw={1.2}><circle cx="8" cy="8" r="2.400" /><path d="M6.500 1h3l.6 2 1.600.9 2-.5 1.500 2.600L13.800 7.500v1l1.400 1.500-1.500 2.600-2-.5-1.600.9-.6 2h-3l-.6-2-1.600-.9-2 .5L.8 10l1.400-1.500v-1L.8 6l1.500-2.600 2 .5L5.900 3z" strokeLinejoin="round" /></Icon></HeaderButton>
          </HeaderTools>
        </DeviceBar>
        <Body>
          <SideNav />
          <Main>
            <Preview>
              <Keyboard />
              <ResetButton>Zurücksetzen</ResetButton>
            </Preview>
            <Workspace>
              <FunctionPane>
                <PaneTitle>Funktionen</PaneTitle>
                <FunctionList>
                  {Object.keys(fnIcons).map((name) => (
                    <li key={name}>
                      <FunctionButton $active={name === effect} onClick={() => setEffect(name)}>
                        {fnIcons[name]}
                        {name}
                      </FunctionButton>
                    </li>
                  ))}
                </FunctionList>
              </FunctionPane>
              <SettingsPane>
                <PaneTitle>Einstellungen</PaneTitle>
                <MinorLabel $first>Farbe</MinorLabel>
                <PatternOption>
                  <Radio type="radio" name="farbe" defaultChecked />
                  Muster
                </PatternOption>
                <GradientPanel>
                  <PresetButton aria-label="Farbmuster"><PresetSwatch /><Caret /></PresetButton>
                  <PanelRule />
                  <GradientTrack>
                    {stops.map((s, i) => (
                      <Stop key={s.c} $color={s.c} $active={i === 0} style={{ left: `${s.p}%` }} aria-label={`Farbe ${i + 1}`} />
                    ))}
                    <GradientBar style={{ background: `linear-gradient(90deg, ${stops.map((s) => `${s.c} ${s.p}%`).join(", ")})` }} />
                  </GradientTrack>
                  <TrashButton aria-label="Löschen">
                    <svg width="14" height="16" viewBox="0 0 14 16" fill="none" stroke="#aaa" strokeWidth="1.200" aria-hidden="true">
                      <path d="M1 3.500h12M5 3.500V1.500h4v2M2.500 3.500l1 11h7l1-11M5.800 6v6M8.200 6v6" />
                    </svg>
                  </TrashButton>
                </GradientPanel>
                <MinorLabel>Effekt modifizieren</MinorLabel>
                <EffectRow>
                  <span id="analog-label">Analoger Effekt</span>
                  <Toggle role="switch" aria-checked={analog} aria-labelledby="analog-label" onClick={() => setAnalog(!analog)}>
                    <span>{analog ? "ON" : "OFF"}</span>
                  </Toggle>
                </EffectRow>
                <Sliders>
                  <Slider id="led" label="LED-Helligkeit" initial={50} text={(v) => `${v}%`} />
                  <Slider id="speed" label="Geschwindigkeit" initial={50} text={(v) => (v < 34 ? "Langsam" : v < 67 ? "Normal" : "Schnell")} />
                  <Slider id="dicke" label="Dicke" initial={100} text={(v) => (v < 34 ? "Dünn" : v < 67 ? "Mittel" : "Stark")} />
                </Sliders>
                <DirectionTitle>Richtung</DirectionTitle>
                <Directions>
                  {directionShapes.map(([name, outer, inner]) => (
                    <DirectionButton key={name} $active={name === direction} aria-label={name} onClick={() => setDirection(name)}>
                      <Icon w={16}><path d={outer} /><path d={inner} {...F} /></Icon>
                    </DirectionButton>
                  ))}
                  <DirectionButton $active={direction === "Beidseitig"} aria-label="Beidseitig" onClick={() => setDirection("Beidseitig")}>
                    <Icon w={19} h={16} box="0 0 19 16"><path d="M8.500 2.500v11L1 8zM10.500 2.500v11L18 8z" /><path d="M8.500 5v6L4.500 8zM10.500 5v6l4-3z" {...F} /></Icon>
                  </DirectionButton>
                </Directions>
              </SettingsPane>
            </Workspace>
          </Main>
        </Body>
      </AppFrame>
      <Watermark>
        <div><em>h</em>ard<em>w</em>are</div>
        <div><em>i</em>nside</div>
      </Watermark>
      <Activation>
        <strong>Windows aktivieren</strong>
        Wechseln Sie zu den Einstellungen, um Windows zu aktivieren.
      </Activation>
    </Page>
  );
}
